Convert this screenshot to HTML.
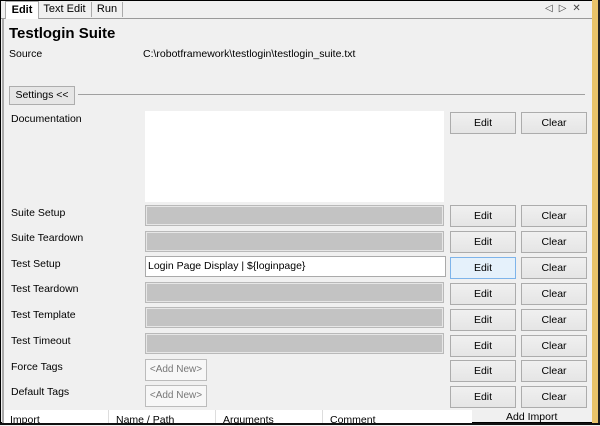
<html><head><style>
body{margin:0;width:600px;height:425px;overflow:hidden;background:#f0f0f0;font-family:"Liberation Sans",sans-serif;font-size:11px;color:#000;position:relative}
.a{position:absolute}
.lbl{position:absolute;left:11px;font-size:10.5px}
.fld{position:absolute;left:145px;width:297px;height:19px;background:#c3c3c3;border:1px solid #b9b9b9;box-shadow:inset 0 0 0 1px #e6e6e6}
.btn{position:absolute;width:64px;height:20px;border:1px solid #acacac;background:linear-gradient(#f0f0f0,#e5e5e5);text-align:center;line-height:20px;font-size:10.5px}
.tag{position:absolute;left:145px;width:60px;height:20px;border:1px solid #bcbcbc;background:#f7f7f7;color:#777;text-align:center;line-height:20px;font-size:10px}
</style></head><body>
<div class="a" style="left:0;top:0;width:592px;height:423px;border:1px solid #000;border-right:none;box-sizing:border-box"></div>
<div class="a" style="left:592px;top:0;width:6px;height:425px;background:#e8c36a"></div>
<div class="a" style="left:598px;top:0;width:2px;height:425px;background:#222"></div>
<div class="a" style="left:0;top:423px;width:600px;height:2px;background:#111"></div>
<!-- tabs -->
<div class="a" style="left:1px;top:1px;width:591px;height:17px;background:#f0f0f0;border-bottom:1px solid #999"></div>
<div class="a" style="left:5px;top:1px;width:32px;height:17px;background:#fff;border:1px solid #aaa;border-bottom:none;font-weight:bold;line-height:17px;text-align:center">Edit</div>
<div class="a" style="left:38px;top:2px;width:53px;height:15px;border-right:1px solid #aaa;line-height:15px;text-align:center">Text Edit</div>
<div class="a" style="left:92px;top:2px;width:30px;height:15px;border-right:1px solid #aaa;line-height:15px;text-align:center">Run</div>
<div class="a" style="left:545px;top:3px;font-size:10px;color:#444;letter-spacing:6px">◁▷✕</div>
<div class="a" style="left:2px;top:19px;width:2px;height:404px;background:#aaa"></div>
<div class="a" style="left:9px;top:25px;font-size:15px;font-weight:bold">Testlogin Suite</div>
<div class="lbl" style="left:9px;top:48px">Source</div>
<div class="a" style="left:143px;top:48px;font-size:10.5px">C:\robotframework\testlogin\testlogin_suite.txt</div>
<div class="a" style="left:9px;top:86px;width:64px;height:17px;border:1px solid #adadad;background:#e6e6e6;line-height:17px;text-align:center;font-size:10.5px">Settings &lt;&lt;</div>
<div class="a" style="left:78px;top:94px;width:507px;height:1px;background:#a0a0a0"></div>
<div class="lbl" style="top:113px">Documentation</div>
<div class="a" style="left:145px;top:111px;width:299px;height:91px;background:#fff"></div>
<div class="btn" style="left:450px;top:112px">Edit</div><div class="btn" style="left:521px;top:112px">Clear</div>

<div class="lbl" style="top:207px">Suite Setup</div><div class="fld" style="top:205px"></div>
<div class="btn" style="left:450px;top:205px">Edit</div><div class="btn" style="left:521px;top:205px">Clear</div>
<div class="lbl" style="top:232px">Suite Teardown</div><div class="fld" style="top:231px"></div>
<div class="btn" style="left:450px;top:231px">Edit</div><div class="btn" style="left:521px;top:231px">Clear</div>
<div class="lbl" style="top:258px">Test Setup</div>
<div class="a" style="left:145px;top:256px;width:297px;height:19px;background:#fff;border:1px solid #aaa;line-height:19px;padding-left:2px;font-size:10.5px">Login Page Display | ${loginpage}</div>
<div class="btn" style="left:450px;top:257px;border-color:#7eb4ea;background:#e5f1fb">Edit</div><div class="btn" style="left:521px;top:257px">Clear</div>
<div class="lbl" style="top:283px">Test Teardown</div><div class="fld" style="top:282px"></div>
<div class="btn" style="left:450px;top:283px">Edit</div><div class="btn" style="left:521px;top:283px">Clear</div>
<div class="lbl" style="top:309px">Test Template</div><div class="fld" style="top:307px"></div>
<div class="btn" style="left:450px;top:309px">Edit</div><div class="btn" style="left:521px;top:309px">Clear</div>
<div class="lbl" style="top:335px">Test Timeout</div><div class="fld" style="top:333px"></div>
<div class="btn" style="left:450px;top:335px">Edit</div><div class="btn" style="left:521px;top:335px">Clear</div>
<div class="lbl" style="top:361px">Force Tags</div><div class="tag" style="top:359px">&lt;Add New&gt;</div>
<div class="btn" style="left:450px;top:360px">Edit</div><div class="btn" style="left:521px;top:360px">Clear</div>
<div class="lbl" style="top:386px">Default Tags</div><div class="tag" style="top:385px">&lt;Add New&gt;</div>
<div class="btn" style="left:450px;top:386px">Edit</div><div class="btn" style="left:521px;top:386px">Clear</div>

<div class="a" style="left:4px;top:410px;width:468px;height:13px;background:#fff"></div>
<div class="a" style="left:108px;top:410px;width:1px;height:13px;background:#ddd"></div>
<div class="a" style="left:215px;top:410px;width:1px;height:13px;background:#ddd"></div>
<div class="a" style="left:322px;top:410px;width:1px;height:13px;background:#ddd"></div>
<div class="a" style="left:10px;top:414px;font-size:10.5px">Import</div>
<div class="a" style="left:116px;top:414px;font-size:10.5px">Name / Path</div>
<div class="a" style="left:223px;top:414px;font-size:10.5px">Arguments</div>
<div class="a" style="left:330px;top:414px;font-size:10.5px">Comment</div>
<div class="a" style="left:506px;top:411px;font-size:10.5px">Add Import</div>
</body></html>
